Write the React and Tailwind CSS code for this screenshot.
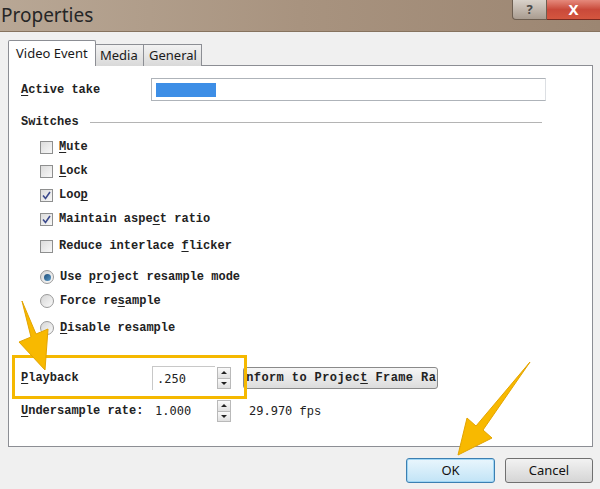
import { useState } from 'react';

const MONO = { fontFamily: '"Liberation Mono", "DejaVu Sans Mono", monospace' };

function U({ children }) {
  return <span className="underline underline-offset-2">{children}</span>;
}

function CheckBox({ checked }) {
  return (
    <div className="w-[13px] h-[13px] border border-[#8e8f8f] bg-gradient-to-br from-[#dcdcdc] to-[#f8f8f8] flex items-center justify-center shrink-0">
      {checked && (
        <svg width="9" height="9" viewBox="0 0 9 9">
          <path d="M1 4.5 L3.5 7.5 L8 1" fill="none" stroke="#3c4a8c" strokeWidth="1.6" />
        </svg>
      )}
    </div>
  );
}

function Radio({ checked }) {
  return (
    <div className="w-[14px] h-[14px] rounded-full border border-[#9a9a9a] bg-gradient-to-br from-[#d6d6d6] to-[#fafafa] flex items-center justify-center shrink-0">
      {checked && <div className="w-[7px] h-[7px] rounded-full bg-gradient-to-br from-[#1f4f7a] to-[#5a9ac8]" />}
    </div>
  );
}

function Spinner() {
  return (
    <div className="w-[14px] h-[22px] flex flex-col border border-[#b9b9b9] bg-[#f4f4f4]">
      <div className="flex-1 flex items-center justify-center border-b border-[#b9b9b9] bg-gradient-to-b from-[#fafafa] to-[#e0e0e0]">
        <div className="w-0 h-0 border-l-[3px] border-r-[3px] border-b-[3px] border-l-transparent border-r-transparent border-b-[#222]" />
      </div>
      <div className="flex-1 flex items-center justify-center bg-gradient-to-b from-[#fafafa] to-[#e0e0e0]">
        <div className="w-0 h-0 border-l-[3px] border-r-[3px] border-t-[3px] border-l-transparent border-r-transparent border-t-[#222]" />
      </div>
    </div>
  );
}

const switches = [
  { label: <><U>M</U>ute</>, checked: false },
  { label: <><U>L</U>ock</>, checked: false },
  { label: <>Loo<U>p</U></>, checked: true },
  { label: <>Maintain aspe<U>c</U>t ratio</>, checked: true },
  { label: <>Reduce interlace <U>f</U>licker</>, checked: false, gap: true },
];

const modes = [
  { label: <>Use p<U>r</U>oject resample mode</>, checked: true },
  { label: <>Force re<U>s</U>ample</>, checked: false },
  { label: <><U>D</U>isable resample</>, checked: false, gap: true },
];

export default function App() {
  const [tab] = useState('Video Event');

  return (
    <div className="relative w-[600px] h-[489px] overflow-hidden bg-[#f0f0f0] text-[#1a1a1a]" style={{ fontFamily: '"Noto Sans", "Open Sans", sans-serif' }}>
      {/* title bar */}
      <div className="h-[32px] flex items-start justify-between bg-gradient-to-r from-[#b8a795] via-[#a8937f] to-[#9c8672] border-b border-[#86735f]">
        <div className="pl-[1px] pt-[2px] text-[19px] leading-[26px] text-[#262626]">Properties</div>
        <div className="flex">
          <div className="w-[35px] h-[20px] rounded-bl-[4px] border border-t-0 border-[#6d5e50] bg-gradient-to-b from-[#d9d2ca] to-[#a99c90] flex items-center justify-center text-[13px] font-bold text-[#4a4a4a]">?</div>
          <div className="w-[53px] h-[20px] border-b border-[#7a2a20] bg-gradient-to-b from-[#e5897c] via-[#c9493a] to-[#d4563f] flex items-center justify-center text-[15px] font-bold text-white">X</div>
        </div>
      </div>

      {/* tabs */}
      <div className="px-[8px] pt-[8px]">
        <div className="flex items-end h-[26px] relative z-10">
          <div className="h-[26px] w-[88px] bg-white border border-b-0 border-[#8c8e94] rounded-t-[2px] flex items-center pl-[7px] text-[13px]">{tab}</div>
          <div className="h-[22px] w-[48px] bg-gradient-to-b from-[#f2f2f2] to-[#d9d9d9] border border-l-0 border-b-0 border-[#8c8e94] flex items-center pl-[4px] text-[13px]">Media</div>
          <div className="h-[22px] w-[58px] bg-gradient-to-b from-[#f2f2f2] to-[#d9d9d9] border border-l-0 border-b-0 border-[#8c8e94] flex items-center pl-[5px] text-[13px]">General</div>
        </div>

        {/* panel */}
        <div className="-mt-px h-[382px] w-[585px] bg-white border border-[#8c8e94] pl-[12px] text-[12px] font-bold text-[#222]" style={MONO}>
          <div className="mt-[12px] h-[23px] flex items-center">
            <div className="w-[130px]"><U>A</U>ctive take</div>
            <div className="w-[395px] h-[23px] border border-[#aeb3b9] border-r-[#dcdfe3] flex items-center pl-[4px]">
              <div className="w-[60px] h-[14px] bg-[#3d8ee6]" />
            </div>
          </div>

          <div className="mt-[14px] h-[14px] flex items-center">
            <div>Switches</div>
            <div className="ml-[11px] w-[452px] h-0 border-t border-[#b4b4b4]" />
          </div>

          <div className="mt-[6px] pl-[19px]">
            {switches.map((s, i) => (
              <div key={i} className={`h-[24px] flex items-center gap-[6px] ${s.gap ? 'mt-[3px]' : ''}`}>
                <CheckBox checked={s.checked} />
                <span>{s.label}</span>
              </div>
            ))}
          </div>

          <div className="mt-[7px] pl-[19px]">
            {modes.map((m, i) => (
              <div key={i} className={`h-[24px] flex items-center gap-[6px] ${m.gap ? 'mt-[3px]' : ''}`}>
                <Radio checked={m.checked} />
                <span>{m.label}</span>
              </div>
            ))}
          </div>

          <div className="mt-[26px] h-[24px] flex items-center">
            <div className="w-[131px]"><U>P</U>layback</div>
            <div className="w-[63px] h-[24px] border-t border-l border-[#c8c8c8] flex items-center pl-[4px] font-normal" style={{ fontFamily: '"DejaVu Sans Mono", monospace' }}>.250</div>
            <div className="ml-[2px]"><Spinner /></div>
            <div className="ml-[12px] w-[195px] h-[22px] border border-[#8a8a8a] rounded-[3px] bg-gradient-to-b from-[#f6f6f6] to-[#dcdcdc] overflow-hidden flex items-center whitespace-nowrap">
              <span className="-ml-[13px] tracking-[0.4px]">Conform to Projec<U>t</U> Frame Rate</span>
            </div>
          </div>

          <div className="mt-[10px] h-[22px] flex items-center">
            <div className="w-[134px]"><U>U</U>ndersample rate:</div>
            <div className="w-[62px] font-normal" style={{ fontFamily: '"DejaVu Sans Mono", monospace' }}>1.000</div>
            <Spinner />
            <div className="ml-[18px] font-normal"><span style={{ fontFamily: '"DejaVu Sans Mono", monospace' }}>29.970</span> fps</div>
          </div>
        </div>

        {/* buttons */}
        <div className="mt-[11px] flex justify-end gap-[10px] w-[585px]">
          <button className="w-[89px] h-[25px] rounded-[3px] border border-[#3c7fb1] bg-gradient-to-b from-[#e9f6fd] to-[#c2e4f6] shadow-[inset_0_0_0_1px_#9fd6f5] text-[13px] text-[#111]">OK</button>
          <button className="w-[88px] h-[25px] rounded-[3px] border border-[#707070] bg-gradient-to-b from-[#f2f2f2] to-[#d5d5d5] text-[13px] text-[#111]">Cancel</button>
        </div>
      </div>

      {/* annotation: highlight box */}
      <div className="absolute left-[12px] top-[355px] w-[235px] h-[44px] border-[3px] border-[#f5b800] pointer-events-none" />

      {/* annotation arrows */}
      <svg className="absolute inset-0 pointer-events-none" width="600" height="489" viewBox="0 0 600 489">
        <polygon points="22,301 36,334 48,329 45,370 19,342 31,337" fill="#f8b900" stroke="#e3a400" strokeWidth="1" strokeLinejoin="round" />
        <polygon points="530,362 483,430 492,438 458,455 467,418 476,426" fill="#f8b900" stroke="#e3a400" strokeWidth="1" strokeLinejoin="round" />
      </svg>
    </div>
  );
}
